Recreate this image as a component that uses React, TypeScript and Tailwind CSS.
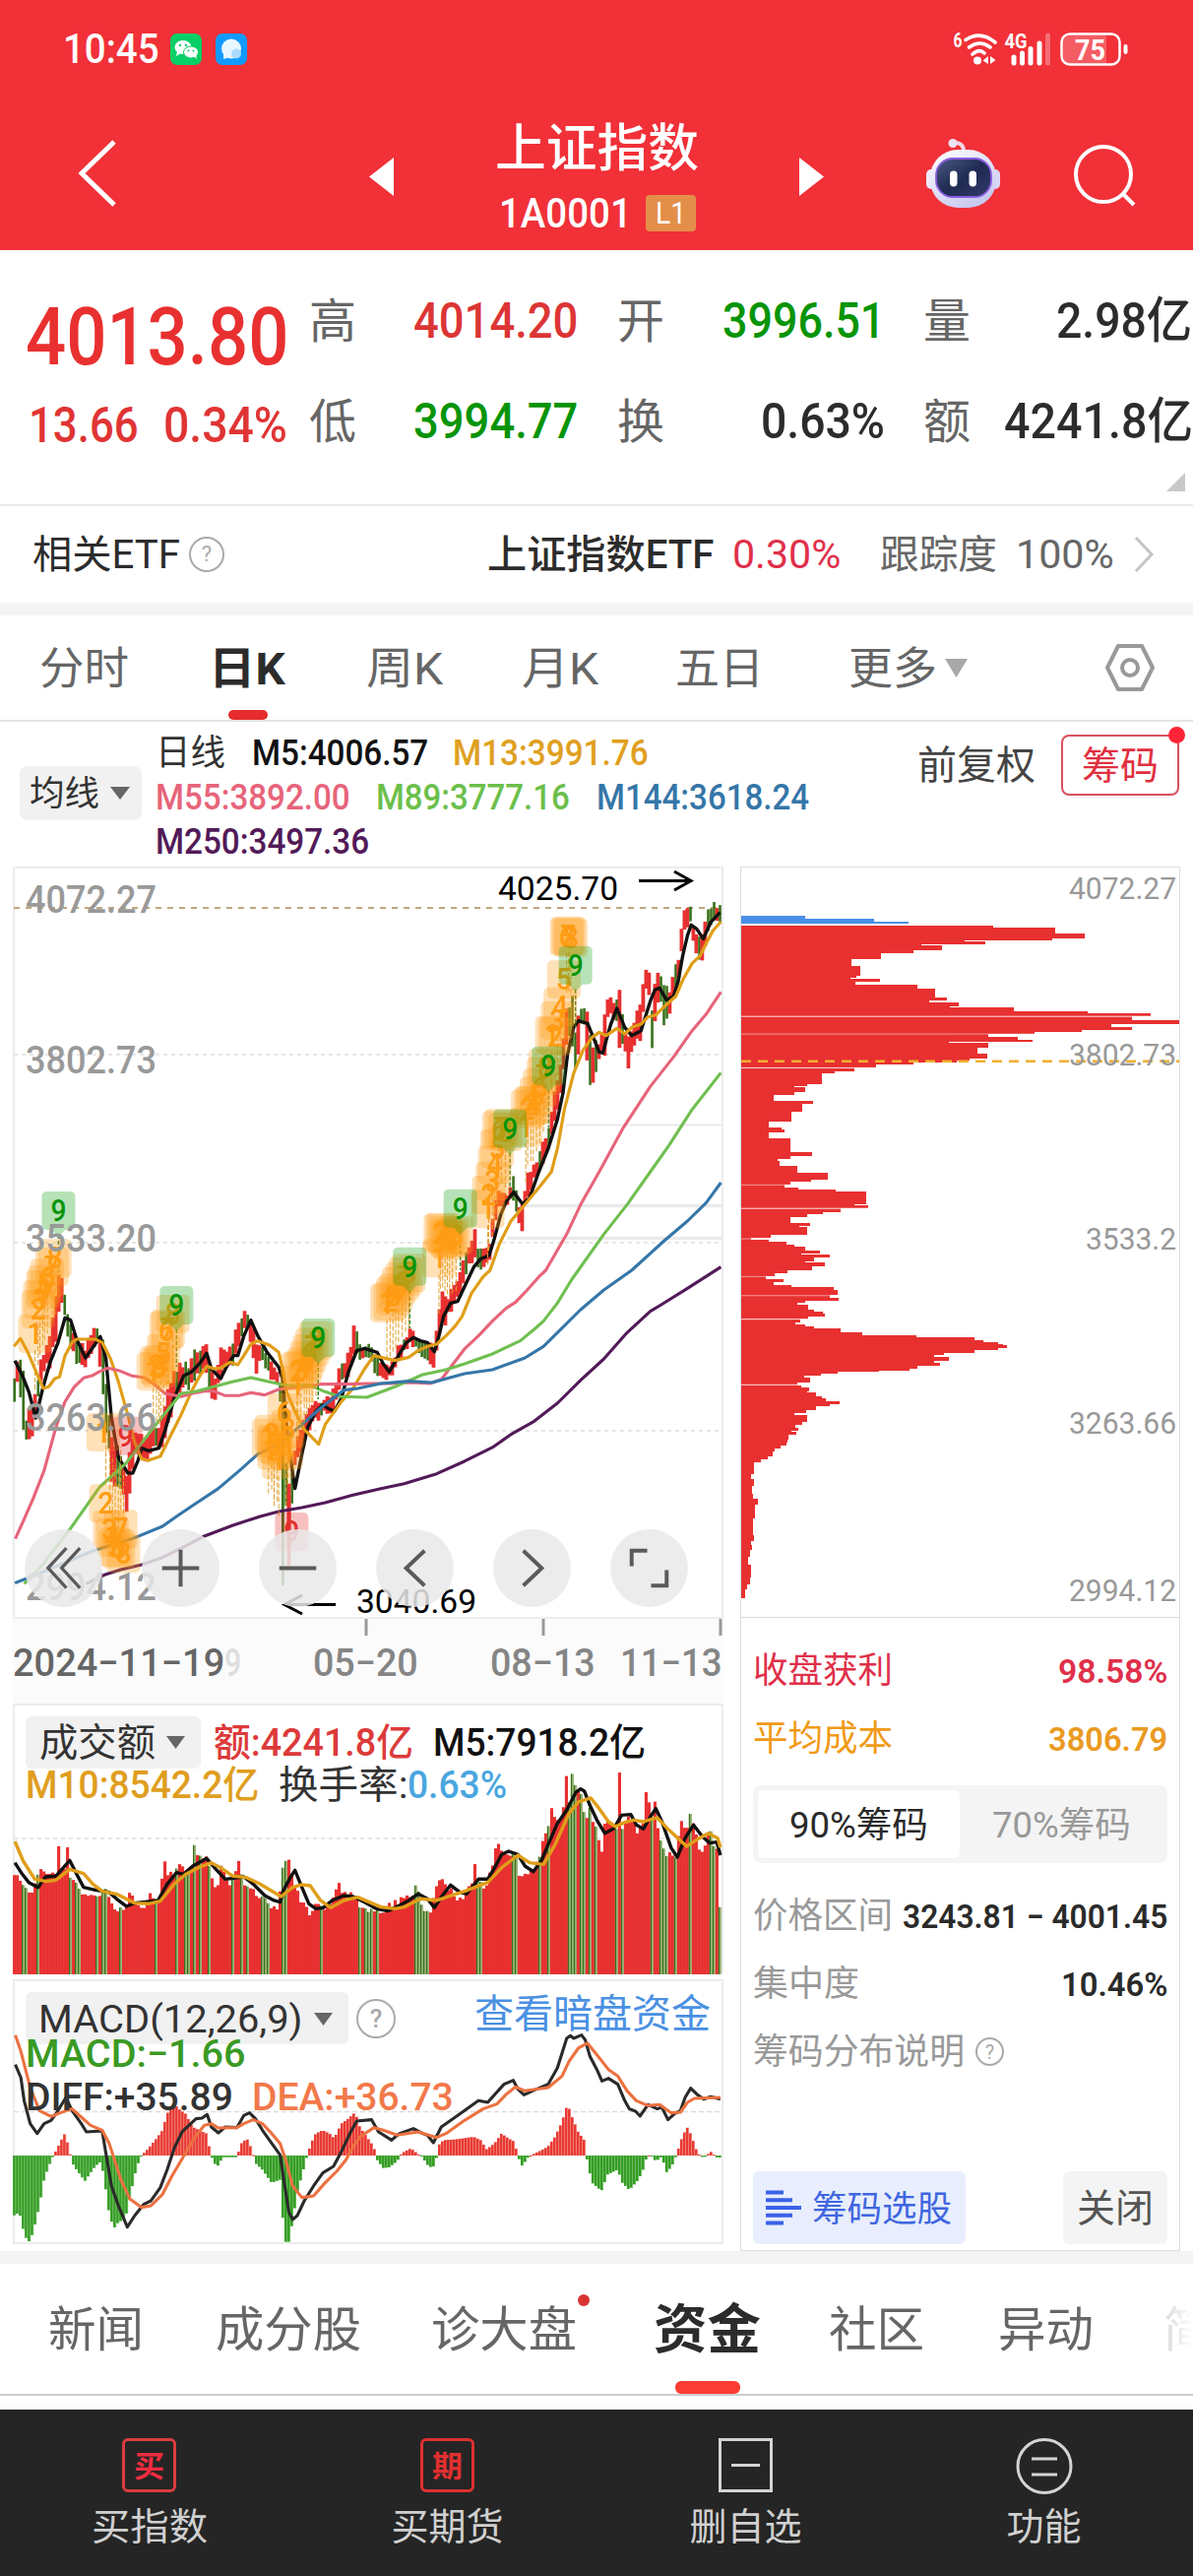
import React, { useLayoutEffect, useRef } from "react";

/* ---------- text that is condensed to a given width ---------- */
function T({ w, c = "", children }: { w: number; c?: string; children: React.ReactNode }) {
  const ref = useRef<HTMLSpanElement>(null);
  useLayoutEffect(() => {
    const el = ref.current;
    if (el) el.style.transform = `scaleX(${w / el.offsetWidth})`;
  }, [w, children]);
  return (
    <span className={"block shrink-0 leading-none whitespace-nowrap " + c} style={{ width: w }}>
      <span ref={ref} className="inline-block origin-left">{children}</span>
    </span>
  );
}

const Caret = ({ c = "" }: { c?: string }) => (
  <svg className={c} viewBox="0 0 20 14" preserveAspectRatio="none"><path d="M0 0H20L10 14Z" fill="currentColor" /></svg>
);

const Help = ({ c = "" }: { c?: string }) => (
  <span className={"flex shrink-0 items-center justify-center rounded-full border-2 border-[#aaa] leading-none text-[#aaa] " + c}>?</span>
);

/* ---------- data ---------- */
type P = [number, number];
function parse(s: string, dy = 0): P[] {
  return s.trim().split(/\s+/).map((q) => {
    const [x, y] = q.split(",").map(Number);
    return [x, y + dy] as P;
  });
}
const line = (low: string, high = "") =>
  [...parse(low), ...(high ? parse(high, -1230) : [])].map((p) => p.join(",")).join(" ");
function at(pts: number[][], x: number, k = 1) {
  let i = 1;
  while (i < pts.length - 1 && pts[i][0] < x) i++;
  const a = pts[i - 1], b = pts[i];
  const t = Math.max(0, Math.min(1, (x - a[0]) / (b[0] - a[0])));
  return a[k] + (b[k] - a[k]) * t;
}
const rnd = (i: number) => {
  const v = Math.sin(i * 127.1 + 11.7) * 43758.5453;
  return v - Math.floor(v);
};

const ranges = (s: string, dy: number) =>
  s.trim().split(/\s+/).map((q) => {
    const [x, a, b] = q.split(",").map(Number);
    return [x, a + dy, b + dy];
  });
const price = [
  ...ranges(`30,340,470 40,270,350 48,290,500 56,450,580 68,430,590 78,360,460 90,280,380 98,250,340 110,190,330 118,60,280 128,0,140
  138,90,180 146,150,250 160,230,300 170,240,340 185,250,340 196,210,290 208,190,250 220,200,420 230,400,560 240,500,680 252,550,700
  264,600,720 272,640,775 280,560,700 290,510,600 300,520,590 316,540,640 330,490,590 345,470,600 358,390,540 370,340,470 380,320,440
  395,290,400 405,310,400 420,265,370 435,260,350 445,250,360 455,330,430 463,360,440 476,250,360 490,270,340 500,240,350 512,180,290
  522,150,230 533,145,220 545,200,320 552,250,350 560,240,300 575,280,340 590,310,380 600,330,400 606,380,500 621,680,900 635,550,640
  650,490,580 665,450,530 680,410,500 695,420,470 710,410,480 720,370,480 733,310,380 750,270,370 763,190,290 780,260,310 793,240,300
  810,290,360 825,310,370 840,320,360 855,260,330 868,240,290 884,200,260 900,240,280 915,250,320 933,250,335 942,180,260 952,90,220
  965,95,180 980,60,140 993,10,100 1005,-40,50`, 0),
  ...ranges(`1022,1128,1220 1028,1175,1250 1040,1190,1270 1055,1170,1230 1063,1060,1150 1072,1010,1080 1085,1010,1075 1095,1020,1070
  1104,960,1040 1115,1040,1130 1124,1060,1150 1133,970,1050 1145,940,1010 1160,900,970 1170,850,930 1182,810,900 1192,720,810
  1200,670,800 1212,550,700 1222,420,560 1232,420,600 1240,510,690 1250,440,520 1258,430,540 1268,500,740 1277,550,720 1290,560,620
  1302,440,610 1310,410,460 1320,440,520 1328,430,500 1334,400,600 1345,510,590 1354,550,658 1362,480,590 1378,440,580 1390,320,430
  1397,325,420 1404,450,608 1412,360,490 1423,330,470 1430,350,530 1440,400,490 1452,340,440 1462,285,370 1470,170,250 1480,140,230
  1486,130,210 1494,210,280 1504,230,320 1512,230,350 1520,160,250 1530,140,210 1538,130,200 1548,145,200`, -1230),
];
const N = 240;
const xs = Array.from({ length: N }, (_, i) => 31 + i * 6.355);
const candles = xs.map((x, i) => {
  const a = at(price, x, 1), b = at(price, x, 2);
  const d = at(price, x + 4, 1) + at(price, x + 4, 2) - at(price, x - 4, 1) - at(price, x - 4, 2);
  const h = b - a;
  return { x, a: a + h * rnd(i) * 0.3, b: b - h * rnd(i + 500) * 0.3, up: d < 0 ? rnd(i + 900) > 0.2 : rnd(i + 900) > 0.65 };
});

const volTop = parse(`30,555 45,570 62,615 75,590 88,535 100,550 115,550 124,545 126,465 131,540 143,520 145,468 151,550 155,560 170,600 185,610 200,615 215,610
228,590 245,650 262,655 272,660 280,605 290,640 310,645 325,615 340,640 350,560 355,510 362,545 378,550 392,512 400,545 412,530 418,465 430,505
445,500 455,560 465,600 478,520 490,580 505,565 514,510 525,590 540,600 560,620 580,640 597,660 610,520 622,510 632,570 645,625
655,640 668,678 680,640 700,655 715,625 730,585 745,620 762,610 780,655 800,655 820,672 835,645 860,635 875,600 885,640 895,580
910,650 928,660 940,590 948,570 958,580 970,600 985,620 997,630 1010,580 1018,570 1022,515 1028,575 1045,590 1060,520 1068,470 1078,465
1090,500 1100,490 1110,470 1117,550 1128,560 1140,540 1155,520 1170,450 1180,420 1187,340 1195,375 1205,400 1212,360 1219,240
1226,330 1232,255 1240,285 1250,300 1262,380 1270,355 1280,400 1288,440 1296,480 1305,370 1315,400 1328,410 1334,243 1340,410
1355,380 1365,390 1375,430 1385,390 1390,305 1398,345 1405,390 1411,310 1418,430 1428,460 1436,500 1445,480 1453,520 1462,430
1468,382 1476,420 1486,375 1495,400 1503,460 1512,480 1522,440 1530,420 1538,470 1545,480 1550,657`);
const volumes = xs.map((x, i) => ({ x, y: at(volTop, x) + (rnd(i + 60) - 0.5) * 22, up: candles[i].up || rnd(i + 77) > 0.8 }));

const hist = parse(`30,750 42,740 50,790 58,825 65,830 75,780 85,720 95,640 105,600 115,567 122,550 132,520 140,500 148,540 156,590 165,610 183,645
195,620 205,600 218,585 225,640 235,740 245,790 255,770 270,760 282,680 295,600 305,567 320,545 340,510 350,490 360,440 375,408
385,425 400,440 415,480 430,490 445,500 452,550 460,590 470,598 480,572 510,572 520,530 532,515 543,550 550,590 565,610 585,650
605,640 612,830 622,830 630,770 640,680 650,630 660,575 670,530 680,500 695,490 710,500 720,515 735,470 750,455 765,435 775,480
790,510 805,540 812,580 825,605 838,603 855,585 865,560 885,545 900,562 910,572 920,595 930,605 937,595 945,535 955,520 980,518
1020,510 1035,520 1048,548 1065,530 1080,500 1095,515 1108,525 1115,570 1125,600 1135,575 1145,565 1160,555 1180,540 1195,510
1210,465 1222,410 1232,450 1245,495 1258,520 1265,590 1275,650 1295,675 1308,625 1330,610 1340,650 1355,672 1375,640 1388,600
1393,565 1405,570 1412,585 1425,570 1436,620 1450,590 1460,550 1470,505 1481,480 1492,520 1502,560 1515,575 1530,555 1545,575 1550,573`);

const chipRows = parse(`140,807 144,995 157,1084 167,985 170,720 172,783 178,588 181,650 191,562 196,464 210,374 223,400 243,390 247,372 250,462 256,386
262,575 270,629 288,665 294,610 298,702 305,675 308,868 315,1093 320,1287 326,1229 333,1374 341,1166 348,1229 354,1077 358,932
362,792 368,880 373,926 378,672 380,792 390,757 402,789 412,735 417,695 421,562 425,450 431,384 438,324 443,284 464,238 468,200
471,232 481,200 486,137 498,256 504,225 521,191 541,121 553,162 556,171 562,121 575,188 602,254 612,188 617,150 621,156 631,208
645,302 659,250 664,188 669,171 675,212 680,326 684,418 709,383 711,425 718,342 726,288 730,238 736,187 747,249 753,214 756,240
771,129 778,67 781,122 786,175 791,201 796,233 804,279 810,222 812,309 818,261 826,233 829,294 836,254 845,178 850,139 857,114
862,168 868,138 875,190 879,320 885,332 895,309 901,336 907,233 911,210 914,242 924,260 929,288 933,293 938,242 944,219 950,203
955,233 959,261 963,340 971,408 977,573 981,748 987,777 990,822 994,836 997,848 1003,820 1008,750 1013,657 1018,627 1021,672
1030,627 1034,645 1040,575 1045,552 1049,459 1052,333 1055,282 1060,230 1064,249 1073,210 1079,220 1084,245 1091,240 1094,266
1101,285 1106,296 1111,339 1117,308 1121,265 1130,235 1136,200 1140,238 1153,225 1160,203 1165,212 1171,190 1174,207 1180,183
1190,180 1195,177 1202,158 1209,139 1214,133 1225,119 1231,97 1236,78 1260,69 1270,77 1285,72 1300,75 1310,88 1322,80 1350,73
1385,77 1396,67 1405,72 1415,65 1430,59 1445,68 1472,65 1485,57 1495,50 1514,38`);

/* ---------- overlay signals ---------- */
type Badge = { x: number; y: number; n: string; k: "o" | "g" | "r" };
const list = (s: string): Badge[] =>
  s.trim().split(/\s+/).map((q) => {
    const [x, y, n] = q.split(",");
    return { x: +x, y: +y, n, k: "o" as const };
  });
const badges: Badge[] = [
  ...list("75,165,1 82,90,2 86,60,3 92,30,4 96,15,5 102,-5,6 112,-40,7 118,-65,8"),
  ...list("330,280,1 337,262,2 342,270,3 346,258,4 352,225,5 358,155,6 362,150,7 372,105,8"),
  ...list("222,465,1 228,682,2 236,762,3 242,785,4 248,815,5 255,820,6 260,760,7 266,835,8"),
  ...list("578,482,1 585,470,2 590,500,3 590,520,2 597,505,7 612,405,6 620,455,8 600,550,1 616,520,4"),
  ...list("640,320,1 640,280,2 648,275,3 655,265,4 660,245,5 666,225,6 672,205,7 680,185,8"),
  ...list("833,72,1 840,65,2 846,50,3 852,40,4 858,20,5 866,5,6 873,-10,7 880,-20,8"),
  ...list("945,-65,1 948,-142,2 953,-145,3 958,-135,4 963,-125,5 968,-120,6 974,-128,7 982,-135,8"),
  ...list("1050,-215,1 1052,-258,2 1060,-300,3 1065,-350,4 1070,-400,5 1074,-455,6 1080,-462,7 1088,-450,8"),
  ...list("1132,-465,1 1136,-520,2 1143,-530,3 1148,-530,4 1155,-560,5 1162,-585,6 1170,-620,7 1174,-645,8"),
  ...list("1188,-745,1 1195,-742,2 1200,-790,3 1206,-832,4 1214,-914,5 1220,-1045,6 1224,-1048,7 1229,-1042,8"),
];
const nines: Badge[] = [
  { x: 126, y: -210, n: "9", k: "g" }, { x: 380, y: 78, n: "9", k: "g" }, { x: 685, y: 177, n: "9", k: "g" },
  { x: 882, y: -40, n: "9", k: "g" }, { x: 991, y: -217, n: "9", k: "g" }, { x: 1098, y: -460, n: "9", k: "g" },
  { x: 1181, y: -652, n: "9", k: "g" }, { x: 1239, y: -958, n: "9", k: "g" },
  { x: 270, y: 476, n: "9", k: "r" }, { x: 628, y: 768, n: "9", k: "r" },
];
const SX = 0.4719;
function BadgeMark({ b }: { b: Badge }) {
  const x = b.x * SX, y = 1280 + b.y / 3;
  const fill = b.k === "g" ? "#10a010" : b.k === "r" ? "#e33030" : "#ff9c14";
  return (
    <g>
      <rect x={x - 17} y={y} width="34" height="39" rx="5" fill={fill} opacity="0.3" />
      {b.k === "g" && <path d={`M${x - 7} ${y + 39}h14l-7 7z`} fill={fill} opacity="0.3" />}
      <text x={x} y={y + 30} textAnchor="middle" fontSize="31" fontWeight="500" textLength="16" lengthAdjust="spacingAndGlyphs"
        fill={b.k === "g" ? "#089408" : fill}>{b.n}</text>
    </g>
  );
}

const Ln = ({ p, c, w = 3.1 }: { p: string; c: string; w?: number }) => (
  <polyline points={p} fill="none" stroke={c} strokeWidth={w} strokeLinejoin="round" vectorEffect="non-scaling-stroke" />
);
const Lab = ({ x, y, w, s = 39, f = "#999", children, wt = 500 }: { x: number; y: number; w: number; s?: number; f?: string; wt?: number; children: string }) => (
  <text x={x} y={y} fontSize={s} fill={f} fontWeight={wt} textLength={w} lengthAdjust="spacingAndGlyphs">{children}</text>
);

function KChart() {
  return (
    <svg className="block h-[764px] w-[722px]" viewBox="13 880 722 764">
      <rect x="14" y="881" width="720" height="762" fill="#fff" stroke="#ececec" strokeWidth="2" />
      <g stroke="#e6e6e6" strokeWidth="2">
        <path d="M14 1071H733M14 1262H733M14 1453H733" strokeDasharray="4 4" />
        <path d="M575 1142.500H733" stroke="#eaeaea" />
        <path d="M532 1224.500H733M515 1257.500H733" stroke="#eaeaea" strokeWidth="3.500" />
      </g>
      <path d="M14 922H733" stroke="#bfa77c" strokeWidth="2" strokeDasharray="6 6" />
      <g transform="translate(0 1280) scale(.4719 .3333)">
        {candles.map((k, i) => (
          <rect key={i} x={k.x - (k.up ? 4 : 2.5)} y={k.a} width={k.up ? 8 : 5.5} height={Math.max(20, k.b - k.a)} fill={k.up ? "#e83030" : "#38701b"} />
        ))}
        <rect x="606" y="400" width="6" height="590" fill="#38701b" />
        <rect x="618" y="680" width="8" height="250" fill="#e83030" />
        <Ln c="#111" w={3.4} p={line(`32,305 48,350 62,400 77,480 92,390 108,310 125,250 140,175 152,182 165,240 184,297 200,265 216,232 228,300 240,480 255,600
          275,648 286,648 297,610 305,572 320,580 342,572 355,520 375,420 395,352 412,340 432,310 445,283 455,330 475,360 490,318 503,290
          512,290 525,230 540,182 555,230 575,280 600,325 608,360 620,550 635,695 650,590 662,510 680,460 695,440 705,450 720,460 735,420
          750,340 768,275 785,268 800,275 812,280 825,315 838,340 850,310 862,280 875,250 890,235 905,245 920,250 935,278 945,230 955,170
          970,130 985,125 1000,80 1020,20`, `1035,1225 1053,1215 1065,1160 1078,1090 1090,1050 1106,1022 1125,1058 1140,1040 1160,960
          1180,890 1200,800 1212,720 1222,600 1235,520 1245,500 1265,508 1280,560 1290,595 1298,598 1305,560 1315,510 1328,462 1345,520
          1360,545 1380,530 1400,440 1410,405 1420,400 1435,437 1450,425 1460,380 1470,300 1480,240 1488,208 1500,220 1514,250 1530,200 1550,170`)} />
        <Ln c="#e09e18" w={3.2} p={line(`30,262 44,238 60,280 78,340 93,390 105,385 118,360 128,355 140,290 155,250 165,240 205,240 220,250 238,300 255,370 275,470
          290,555 305,605 318,610 345,597 365,540 390,470 412,400 430,352 445,322 460,330 475,328 495,310 512,318 525,290 540,255 555,245
          580,258 600,280 610,340 617,400 635,460 655,515 686,560 700,500 720,460 735,430 760,390 785,330 805,290 820,295 850,305 880,295
          900,275 920,262 940,255 960,230 980,200 995,170 1015,100 1040,50`, `1055,1260 1075,1180 1100,1110 1130,1060 1165,1000 1187,960
          1200,890 1215,770 1235,660 1255,590 1275,550 1290,535 1305,545 1328,523 1345,540 1360,520 1380,510 1395,488 1412,482 1435,450
          1455,425 1470,375 1490,325 1508,300 1520,265 1535,225 1552,198`)} />
        <Ln c="#e7647a" p={line(`33,848 50,795 70,730 95,640 120,510 140,430 160,385 180,358 200,350 212,340 232,328 255,335 285,352 310,357 330,375 355,405
          390,415 415,405 440,398 460,398 485,412 515,412 540,403 570,410 600,393 630,388 660,385 690,377 740,377 800,375 840,375 890,372
          925,375 950,363 970,325 1000,270 1030,230 1060,185 1090,145 1110,127 1135,90 1160,50`, `1175,1260 1220,1150 1250,1060 1290,960
          1340,830 1400,700 1450,610 1490,530 1520,480 1552,412`)} />
        <Ln c="#70bf50" p={line(`52,985 90,930 150,820 215,690 270,620 330,510 390,405 420,400 460,385 500,370 540,357 580,370 620,382 665,380 700,400 730,415
          790,417 850,385 910,348 960,333 1000,315 1060,285 1120,245 1150,210 1170,185 1200,130 1230,60`, `1245,1260 1300,1150 1350,1060
          1400,960 1440,880 1490,770 1552,658`)} />
        <Ln c="#3576a8" p={line(`32,983 100,945 200,885 290,845 350,810 380,780 420,742 470,695 520,635 555,590 600,560 650,500 690,450 740,395 770,390
          820,375 880,368 930,372 1000,345 1060,333 1130,297 1170,262 1200,220 1250,150 1300,90`, `1360,1260 1430,1170 1480,1110 1520,1055 1552,993`)} />
        <Ln c="#521a58" p={line(`185,985 225,958 260,942 305,927 350,905 400,870 440,840 500,808 560,780 600,765 650,753 700,738 760,715 820,695 870,680
          940,650 1000,612 1060,570 1100,530 1150,490 1200,435 1250,365 1300,300 1350,220 1400,155 1420,138 1480,85 1552,20`)} />
      </g>
      {badges.map((b, i) => {
        const x = b.x * SX, y = 1280 + b.y / 3 + 36;
        const down = b.x > 215 && b.x < 270;
        return <path key={i} d={down ? `M${x} ${y - 36}V${Math.max(1445, y - 100)}` : `M${x} ${y}V${y + 42}`} stroke="#e0a030" strokeWidth="1" strokeDasharray="5 2" />;
      })}
      {nines.filter((b) => b.k === "g").map((b, i) => (
        <path key={i} d={`M${b.x * SX} ${1280 + b.y / 3 + 44}v38`} stroke="#2b8020" strokeWidth="1.500" strokeDasharray="4 2" />
      ))}
      {badges.map((b, i) => <BadgeMark key={i} b={b} />)}
      {nines.map((b, i) => <BadgeMark key={i} b={b} />)}
      <Lab x={26} y={927} w={133}>4072.27</Lab>
      <Lab x={26} y={1090} w={133}>3802.73</Lab>
      <Lab x={26} y={1271} w={133}>3533.20</Lab>
      <Lab x={26} y={1453} w={133}>3263.66</Lab>
      <Lab x={26} y={1625} w={133}>2994.12</Lab>
      <Lab x={506} y={914} w={122} s={34} f="#000" wt={400}>4025.70</Lab>
      <Lab x={362} y={1638} w={122} s={34} f="#000" wt={400}>3040.69</Lab>
      <path d="M649 894.500H700M685 885L702 894.500L685 904" fill="none" stroke="#000" strokeWidth="3" />
      <path d="M341 1629.500H290M307 1620L289 1629.500L307 1639" fill="none" stroke="#000" strokeWidth="3" />
    </svg>
  );
}

function ChipChart() {
  const blue: P[] = [[121, 232], [127, 442], [132, 548]];
  const Y = (v: number) => 870 + v / 2.01;
  return (
    <svg className="block h-[763px] w-[446px]" viewBox="753 880 446 763">
      <g shapeRendering="crispEdges">
        {blue.map(([y, x], i) => (
          <rect key={i} x="753" y={Y(y)} width={x / 3 - 12.6} height={Y(137) - Y(y)} fill="#4a90e6" />
        ))}
        {chipRows.slice(0, -1).map(([y, x], i) => (
          <rect key={i} x="753" y={Y(y)} width={x / 3 - 12.6} height={Y(chipRows[i + 1][0]) - Y(y)} fill="#e83030" />
        ))}
      </g>
      <path d={[326, 431, 718, 944, 1078].map((v) => `M753 ${Y(v)}H1198`).join("")} stroke="#fff" strokeWidth="1" opacity=".85" />
      <path d={[362, 670, 780, 857, 896].map((v) => `M753 ${Y(v)}H1198`).join("")} stroke="#fff" strokeWidth="1" opacity=".5" />
      <path d={`M753 ${Y(417.5)}H1198`} stroke="#f0b030" strokeWidth="2.500" strokeDasharray="10 7" />
      <Lab x={1086} y={913} w={109} s={31} wt={400}>4072.27</Lab>
      <Lab x={1086} y={1082} w={109} s={31} wt={400}>3802.73</Lab>
      <Lab x={1103} y={1269} w={92} s={31} wt={400}>3533.2</Lab>
      <Lab x={1086} y={1456} w={109} s={31} wt={400}>3263.66</Lab>
      <Lab x={1086} y={1626} w={109} s={31} wt={400}>2994.12</Lab>
    </svg>
  );
}

function VolumeChart() {
  return (
    <svg className="block h-[276px] w-[722px]" viewBox="13 1730 722 276">
      <path d="M14 2004V1731H734V2004" fill="none" stroke="#ececec" strokeWidth="2" />
      <path d="M14 1867H733" stroke="#e6e6e6" strokeWidth="2" strokeDasharray="4 4" />
      <g transform="translate(0 1720) scale(.4719 .3333)">
        {volumes.map((v, i) => (
          <g key={i}>
            <rect x={v.x - 3.3} y={v.y} width="6.600" height={855 - v.y} fill={v.up ? "#e83030" : "#9bb57a"} />
            {!v.up && <rect x={v.x - 3.3} y={v.y} width="2.600" height={855 - v.y} fill="#38701b" />}
          </g>
        ))}
        <Ln c="#111" w={3.4} p={line(`32,515 48,550 62,575 82,590 98,558 120,556 150,508 165,550 180,590 205,598 235,605 255,630 272,648 290,638 340,630
          360,580 380,545 395,550 415,525 445,502 465,535 485,565 525,558 545,580 570,615 590,630 603,635 610,600 625,560 635,538 650,590
          665,640 680,655 695,653 715,630 740,615 760,618 785,635 810,655 835,662 860,645 880,630 900,610 920,625 935,652 950,620 970,583
          990,605 1005,610 1030,565 1050,565 1065,530 1080,490 1095,480 1115,490 1130,525 1148,542 1165,510 1180,460 1200,395 1220,355
          1240,300 1250,290 1258,297 1270,340 1285,385 1302,425 1322,410 1338,370 1358,368 1370,400 1385,412 1400,375 1412,350 1425,390
          1445,470 1458,498 1475,440 1493,400 1512,435 1528,455 1543,452 1551,492`)} />
        <Ln c="#e09e18" w={3.4} p={line(`32,450 50,510 75,565 100,572 120,568 150,535 180,548 200,580 220,602 250,610 290,638 320,640 345,632 375,580 400,550
          430,528 455,515 475,530 500,555 530,560 560,580 605,618 630,590 650,582 668,585 690,630 712,652 740,630 770,620 820,650 850,655
          870,650 905,625 940,630 1000,602 1050,575 1080,530 1115,492 1140,515 1170,520 1195,460 1225,365 1245,330 1272,318 1290,350
          1310,390 1325,405 1345,392 1365,385 1385,390 1415,378 1440,415 1478,465 1500,445 1525,425 1545,440 1551,468`)} />
      </g>
    </svg>
  );
}

function MacdChart() {
  return (
    <svg className="block h-[269px] w-[722px]" viewBox="13 2010 722 269">
      <rect x="14" y="2011" width="720" height="267" fill="#fff" stroke="#ececec" strokeWidth="2" />
      <rect x="26" y="2023" width="328" height="53" rx="6" fill="#f1f1f1" />
      <path d="M14 2144.500H733" stroke="#ddd" strokeWidth="1.500" strokeDasharray="5 3" />
      <g transform="translate(0 2000) scale(.4719 .3333)">
        {xs.map((x, i) => {
          const y = at(hist, x), up = y < 568;
          return <rect key={i} x={x - 3.2} y={up ? y : 567} width="6.400" height={Math.max(3, up ? 567 - y : y - 567)} fill={up ? "#e83a32" : "#339d22"} />;
        })}
        {xs.map((x, i) => {
          const y = at(hist, x), up = y < 568;
          return <rect key={i} x={x + 2} y={up ? y : 567} width="1.100" height={Math.max(3, up ? 567 - y : y - 567)} fill={up ? "#f7b0ac" : "#9cd094"} />;
        })}
        <Ln c="#2a2a2a" p={line(`33,290 45,330 52,400 65,470 80,500 95,470 110,460 125,430 142,390 155,430 175,470 186,495 220,492 228,560 240,660
          255,720 274,785 290,750 310,715 325,705 345,665 360,610 375,545 392,495 422,455 435,453 446,442 455,480 470,498 485,480 510,482
          525,445 537,437 550,455 565,490 585,530 603,565 612,650 622,740 630,762 640,750 655,705 675,660 695,620 718,600 735,555 755,495
          768,462 800,458 815,495 843,520 860,500 890,485 910,500 920,505 933,528 950,480 990,440 1030,400 1050,405 1085,350 1105,338
          1115,365 1128,382 1150,368 1180,350 1200,300 1210,255 1220,210 1228,202 1235,210 1252,200 1260,215 1270,265 1285,305 1296,340
          1310,332 1330,350 1345,400 1355,425 1368,432 1378,447 1395,412 1415,425 1425,420 1438,458 1452,440 1465,430 1475,390 1487,362
          1500,380 1515,395 1530,388 1551,395`)} />
        <Ln c="#ec7140" p={line(`33,200 45,250 65,360 85,430 110,448 130,437 155,425 175,450 195,475 220,490 235,530 260,640 280,700 305,725 325,720
          350,685 370,630 395,570 420,510 440,475 455,470 470,483 510,482 525,470 545,458 565,470 585,500 603,530 615,580 630,660 650,695
          675,690 700,650 725,615 745,580 760,540 775,510 805,482 825,490 855,505 900,495 940,512 960,500 1000,460 1040,425 1070,410
          1090,380 1110,358 1130,370 1180,360 1210,325 1225,280 1245,240 1265,225 1285,260 1310,305 1330,325 1350,370 1370,400 1395,415
          1420,412 1445,437 1465,435 1480,405 1495,393 1551,390`)} />
      </g>
    </svg>
  );
}

/* ---------- page sections ---------- */
function StatusBar() {
  return (
    <div className="flex h-[100px] items-center pl-[64px] text-white">
      <T w={98} c="text-[42px] font-medium">10:45</T>
      <svg className="ml-[11px] size-8" viewBox="0 0 32 32">
        <rect width="32" height="32" rx="7" fill="#08cf66" />
        <ellipse cx="13" cy="14" rx="8.500" ry="7" fill="#fff" /><path d="M7 18l-1 5 5-3z" fill="#fff" />
        <ellipse cx="21" cy="19" rx="7.500" ry="6" fill="#fff" stroke="#08cf66" /><path d="M24 23l3 3-1-5z" fill="#fff" />
        <g fill="#08cf66"><circle cx="10" cy="12" r="1.200" /><circle cx="16" cy="12" r="1.200" /><circle cx="18.500" cy="17.500" r="1" /><circle cx="23.500" cy="17.500" r="1" /></g>
      </svg>
      <svg className="ml-[14px] size-8" viewBox="0 0 32 32">
        <rect width="32" height="32" rx="7" fill="#119bff" />
        <circle cx="16" cy="15.500" r="10" fill="#e8f7ff" /><path d="M8 20v6l7-2z" fill="#e8f7ff" />
        <circle cx="21" cy="20.500" r="5" fill="#a9dcff" />
      </svg>
      <svg className="ml-[717px] h-[36px] w-[180px]" viewBox="968 31 180 36" fill="none" stroke="#fff">
        <g strokeWidth="3.600" strokeLinecap="round">
          <path d="M981 39.500Q996 29.500 1011 42M984.500 47Q995.500 39 1006 47M988 54Q995 48 1000 53" />
          <path d="M1030 57V63M1038.500 53V63M1047 48.500V63M1056 43V63" strokeWidth="5" />
          <path d="M1064.500 35V63" strokeWidth="5" opacity=".3" />
        </g>
        <circle cx="993" cy="60.500" r="4" fill="#fff" stroke="none" />
        <path d="M1004 56V64L998.500 60.500ZM1006 56V64L1011.500 60Z" fill="#fff" stroke="none" />
        <rect x="1078.500" y="33.500" width="59" height="31" rx="8.500" strokeWidth="2.500" />
        <path d="M1124 35V63.500H1087Q1080 63.500 1080 56V42Q1080 35 1087 35Z" fill="#fff" opacity=".22" stroke="none" />
        <path d="M1143.500 46V52" strokeWidth="4" strokeLinecap="round" />
        <g fill="#fff" stroke="none" fontWeight="700">
          <text x="968.500" y="47" fontSize="20" textLength="9" lengthAdjust="spacingAndGlyphs">6</text>
          <text x="1020.500" y="48" fontSize="20" textLength="23" lengthAdjust="spacingAndGlyphs">4G</text>
          <text x="1092" y="60" fontSize="30" textLength="31" lengthAdjust="spacingAndGlyphs">75</text>
        </g>
      </svg>
    </div>
  );
}

function TitleBar() {
  return (
    <div className="flex h-[154px] items-start text-white">
      <svg className="mt-[41px] ml-[76px] h-[70px] w-[44px]" viewBox="0 0 44 70"><path d="M40 3L7 35L40 67" fill="none" stroke="#fff" strokeWidth="5" /></svg>
      <svg className="mt-[60px] ml-[255px] h-[39px] w-[25px]" viewBox="0 0 25 39"><path d="M25 0V39L0 19.500Z" fill="#fff" /></svg>
      <div className="ml-[103px] flex w-[209px] flex-col pt-[26px]">
        <T w={207} c="text-[52px] font-medium">上证指数</T>
        <div className="mt-[20px] flex h-[37px] items-center pl-[4px]">
          <T w={135} c="text-[43px] font-medium">1A0001</T>
          <span className="ml-[14px] flex h-[37px] w-[51px] items-center justify-center rounded-[4px] bg-[#e38f4a]">
            <T w={31} c="text-[31px]">L1</T>
          </span>
        </div>
      </div>
      <svg className="mt-[60px] ml-[100px] h-[39px] w-[25px]" viewBox="0 0 25 39"><path d="M0 0V39L25 19.500Z" fill="#fff" /></svg>
      <svg className="mt-[40px] ml-[103px] h-[72px] w-[78px]" viewBox="940 140 78 72">
        <defs>
          <linearGradient id="shell" x1="0" y1="0" x2="0.600" y2="1"><stop offset="0" stopColor="#fff" /><stop offset="1" stopColor="#c9c8ef" /></linearGradient>
          <linearGradient id="face" x1="0" y1="0" x2="1" y2="1"><stop offset="0" stopColor="#4c5a85" /><stop offset=".5" stopColor="#1f2b52" /><stop offset="1" stopColor="#323a6b" /></linearGradient>
        </defs>
        <path d="M968 145Q979 144 979 154" fill="none" stroke="#f4d5e4" strokeWidth="4" /><circle cx="968" cy="145.500" r="4.500" fill="#ece3f4" />
        <rect x="941" y="172" width="12" height="20" rx="5" fill="#eeeafb" /><rect x="1004" y="172" width="12" height="20" rx="5" fill="#d9d6f5" />
        <rect x="945" y="152" width="67" height="59" rx="28" fill="url(#shell)" />
        <rect x="951" y="161" width="56" height="39" rx="17" fill="url(#face)" stroke="#8a5ce0" strokeWidth="1.800" />
        <rect x="965" y="173.500" width="7.500" height="16" rx="3.700" fill="#fff" /><rect x="984.500" y="173.500" width="7.500" height="16" rx="3.700" fill="#fff" />
      </svg>
      <svg className="mt-[46px] ml-[71px] h-[66px] w-[66px]" viewBox="1089 146 66 66" fill="none" stroke="#fff" strokeWidth="4">
        <circle cx="1121" cy="177" r="28" /><path d="M1141 197L1152 208" />
      </svg>
    </div>
  );
}

function Quote() {
  const g = "text-[48px] text-[#666] pt-[2px]";
  return (
    <div className="relative h-[260px] border-b-2 border-[#ebebeb] text-[50px] font-medium text-[#2c2c2c]">
      <div className="flex h-full">
        <div className="w-[314px] pl-[26px] text-[#e03434]">
          <T w={267} c="mt-[47px] text-[82px] text-[#e93030]">4013.80</T>
          <div className="mt-[24px] flex pl-[3px]">
            <T w={112}>13.66</T><span className="w-[25px]" /><T w={126}>0.34%</T>
          </div>
        </div>
        <div className="flex-1 pt-[47px]">
          <div className="flex h-[50px] items-center">
            <T w={48} c={g + " font-normal"}>高</T><T w={167} c="ml-[58px] text-[#dc3535]">4014.20</T>
            <T w={48} c={g + " ml-[40px] font-normal"}>开</T><T w={165} c="ml-[59px] text-[#089408]">3996.51</T>
            <T w={48} c={g + " ml-[39px] font-normal"}>量</T><T w={138} c="ml-[87px]">2.98亿</T>
          </div>
          <div className="mt-[52px] flex h-[50px] items-center">
            <T w={48} c={g + " font-normal"}>低</T><T w={167} c="ml-[58px] text-[#089408]">3994.77</T>
            <T w={48} c={g + " ml-[40px] font-normal"}>换</T><T w={126} c="ml-[98px]">0.63%</T>
            <T w={48} c={g + " ml-[39px] font-normal"}>额</T><T w={192} c="ml-[34px]">4241.8亿</T>
          </div>
        </div>
      </div>
      <svg className="absolute right-[8px] bottom-[13px] size-[19px]" viewBox="0 0 19 19"><path d="M19 0V19H0Z" fill="#c8c8c8" /></svg>
    </div>
  );
}

function EtfRow() {
  return (
    <div className="flex h-[98px] items-center pl-[33px] text-[40px] text-[#2c2c2c]">
      <T w={150} c="pt-[2px]">相关ETF</T>
      <Help c="ml-[9px] size-[36px] text-[22px]" />
      <T w={230} c="ml-[267px] pt-[2px] font-medium">上证指数ETF</T>
      <T w={110} c="ml-[19px] pt-[2px] text-[#e0304a]">0.30%</T>
      <T w={119} c="ml-[40px] pt-[2px] text-[#666]">跟踪度</T>
      <T w={100} c="ml-[19px] pt-[2px] text-[#666]">100%</T>
      <svg className="ml-[19px] h-[38px] w-[23px]" viewBox="0 0 23 38"><path d="M3 2L19 19L3 36" fill="none" stroke="#c4c4c4" strokeWidth="3" /></svg>
    </div>
  );
}

function PeriodTabs() {
  return (
    <div className="relative flex h-[108px] items-center border-b-2 border-[#e5e5e5] pl-[40px] text-[45px] text-[#666]">
      <T w={91} c="pt-[2px]">分时</T>
      <T w={78} c="ml-[81px] pt-[2px] font-bold text-[#2c2c2c]">日K</T>
      <T w={78} c="ml-[82px] pt-[2px]">周K</T>
      <T w={78} c="ml-[80px] pt-[2px]">月K</T>
      <T w={90} c="ml-[78px] pt-[2px]">五日</T>
      <T w={90} c="ml-[86px] pt-[2px]">更多</T>
      <Caret c="ml-[8px] h-[19px] w-[23px] text-[#a8a8a8]" />
      <svg className="ml-[139px] h-[50px] w-[52px]" viewBox="0 0 52 50" fill="none" stroke="#999" strokeWidth="4">
        <path d="M14 3H38L49 25L38 47H14L3 25Z" strokeLinejoin="round" /><circle cx="26" cy="25" r="8" />
      </svg>
      <span className="absolute bottom-0 left-[232px] h-[10px] w-[40px] rounded-[5px] bg-[#e62c2c]" />
    </div>
  );
}

function MaHeader() {
  return (
    <div className="flex h-[147px] text-[36px] font-medium">
      <div className="mt-[45px] ml-[20px] flex h-[55px] w-[124px] items-center rounded-[8px] bg-[#f1f1f1] pl-[10px] text-[35px] font-normal text-[#333]">
        <T w={71} c="pt-[2px]">均线</T><Caret c="ml-[11px] h-[13px] w-[20px] text-[#666]" />
      </div>
      <div className="ml-[14px] flex w-[680px] flex-col gap-[9px] pt-[14px]">
        <div className="flex">
          <T w={71} c="font-normal text-[#333]">日线</T><T w={179} c="ml-[27px] text-[#111]">M5:4006.57</T><T w={199} c="ml-[25px] text-[#e0a020]">M13:3991.76</T>
        </div>
        <div className="flex">
          <T w={198} c="text-[#e7647a]">M55:3892.00</T><T w={197} c="ml-[26px] text-[#6cbf4b]">M89:3777.16</T><T w={216} c="ml-[27px] text-[#3576a8]">M144:3618.24</T>
        </div>
        <T w={217} c="text-[#521a58]">M250:3497.36</T>
      </div>
      <T w={120} c="mt-[25px] ml-[94px] text-[40px] font-normal text-[#444]">前复权</T>
      <div className="relative mt-[13px] ml-[26px] flex h-[62px] w-[120px] items-center justify-center rounded-[8px] border-2 border-[#d9505c] bg-white text-[39px] font-normal text-[#e03040]">
        <T w={78} c="pt-[2px]">筹码</T>
        <span className="absolute -top-[10px] -right-[8px] size-[17px] rounded-full bg-[#ff2438]" />
      </div>
    </div>
  );
}

const ctl = [
  "M50 15L27 40L50 65M67 15L44 40L67 65", "M21 40H59M40 21V59", "M21 40H59", "M50 22L31 40L50 58", "M31 22L50 40L31 58",
  "M22 38V22H38M58 42V58H42",
];

function Charts() {
  return (
    <div className="w-[752px] pl-[13px]">
      <div className="relative">
        <KChart />
        <div className="absolute bottom-[12px] left-[12px] flex gap-[40px]">
          {ctl.map((d, i) => (
            <button key={i} className="size-[79px] rounded-full bg-[#e9e9e9]/85">
              <svg viewBox="0 0 80 80" className="size-full"><path d={d} fill="none" stroke="#5a5a5a" strokeWidth="4" transform={i === 0 ? "translate(2 7) scale(.82)" : undefined} /></svg>
            </button>
          ))}
        </div>
      </div>
      <div className="flex h-[86px] w-[722px] flex-col bg-[#fbfbfb] text-[39px] font-medium text-[#858585]">
        <svg className="block h-[18px] w-[722px]" viewBox="13 1644 722 18"><path d="M372 1644V1661M552 1644V1661M732 1644V1661" stroke="#999" strokeWidth="3" /></svg>
        <div className="mt-[8px] flex">
          <T w={215} c="text-[#666]">2024−11−19</T><T w={17} c="text-[#ddd]">9</T>
          <T w={107} c="ml-[73px]">05−20</T><T w={107} c="ml-[73px]">08−13</T><T w={104} c="ml-[25px]">11−13</T>
        </div>
      </div>
      <div className="relative">
        <VolumeChart />
        <div className="absolute inset-x-0 top-0 text-[39px]">
          <div className="flex items-center pt-[13px] pl-[13px]">
            <div className="flex h-[53px] w-[178px] items-center rounded-[6px] bg-[#f1f1f1] pl-[14px] text-[#333]">
              <T w={118} c="pt-[2px]">成交额</T><Caret c="ml-[11px] h-[13px] w-[19px] text-[#666]" />
            </div>
            <T w={203} c="ml-[13px] pt-[2px] font-medium text-[#dc3a3a]">额:4241.8亿</T>
            <T w={216} c="ml-[20px] pt-[2px] font-medium text-[#111]">M5:7918.2亿</T>
          </div>
          <div className="-mt-[2px] flex pl-[13px]">
            <T w={237} c="font-medium text-[#e09e20]">M10:8542.2亿</T>
            <T w={131} c="ml-[20px] text-[#333]">换手率:</T>
            <T w={101} c="font-medium text-[#4aa6e0]">0.63%</T>
          </div>
        </div>
      </div>
      <div className="relative mt-[4px]">
        <MacdChart />
        <div className="absolute inset-x-0 top-0 text-[39px] font-medium text-[#333]">
          <div className="flex pl-[26px]">
            <T w={268} c="mt-[22px] font-normal">MACD(12,26,9)</T><Caret c="mt-[34px] ml-[12px] h-[13px] w-[19px] text-[#666]" />
            <Help c="mt-[20px] ml-[24px] size-[40px] text-[26px]" />
            <T w={240} c="mt-[16px] ml-[80px] text-[40px] font-normal text-[#4a90e2]">查看暗盘资金</T>
          </div>
          <div className="-mt-[4px] pl-[13px]">
            <T w={224} c="text-[#3a9a24]">MACD:−1.66</T>
            <div className="mt-[5px] flex"><T w={211}>DIFF:+35.89</T><T w={205} c="ml-[19px] text-[#f2794a]">DEA:+36.73</T></div>
          </div>
        </div>
      </div>
    </div>
  );
}

function ChipPanel() {
  const row = "flex h-[69px] items-center justify-between";
  return (
    <div className="h-[1406px] w-[447px] border border-[#dedede]">
      <div className="-my-px"><ChipChart /></div>
      <div className="flex h-[643px] flex-col border-t border-[#dedede] pr-[12px] pl-[12px] text-[36px] text-[#999]">
        <div className="pt-[19px]">
          <div className={row}><T w={142} c="text-[#e0304a]">收盘获利</T><T w={111} c="text-[34px] font-semibold text-[#e0304a]">98.58%</T></div>
          <div className={row}><T w={142} c="text-[#f09a18]">平均成本</T><T w={121} c="text-[34px] font-semibold text-[#ea9a22]">3806.79</T></div>
        </div>
        <div className="mt-[13px] flex h-[79px] w-[421px] rounded-[8px] bg-[#f4f4f4] p-[5px]">
          <div className="flex w-[205px] items-center justify-center rounded-[5px] bg-white"><T w={141} c="pt-[2px] text-[#2a2a2a]">90%筹码</T></div>
          <div className="flex flex-1 items-center justify-center"><T w={141} c="pt-[2px]">70%筹码</T></div>
        </div>
        <div className="pt-[19px]">
          <div className={row}><T w={142}>价格区间</T><T w={269} c="text-[34px] font-semibold text-[#2a2a2a]">3243.81 − 4001.45</T></div>
          <div className={row}><T w={108}>集中度</T><T w={108} c="text-[34px] font-semibold text-[#2a2a2a]">10.46%</T></div>
          <div className="flex h-[69px] items-center"><T w={215}>筹码分布说明</T><Help c="ml-[11px] size-[29px] text-[20px]" /></div>
        </div>
        <div className="mt-[87px] flex justify-between">
          <div className="flex h-[74px] w-[216px] items-center rounded-[6px] bg-[#e8eefd] pl-[13px] text-[#3f66e0]">
            <svg className="h-[36px] w-[36px]" viewBox="0 0 36 36"><path d="M0 2.500H18M0 10.200H27M0 18H36M0 25.800H27M0 33.500H18" stroke="#3a62e8" strokeWidth="4" /></svg>
            <T w={142} c="ml-[11px] pt-[3px]">筹码选股</T>
          </div>
          <div className="flex h-[74px] w-[106px] items-center justify-center rounded-[6px] bg-[#f4f4f4] text-[39px] text-[#555]"><T w={78} c="pt-[3px]">关闭</T></div>
        </div>
      </div>
    </div>
  );
}

function NewsTabs() {
  return (
    <div className="relative flex h-[134px] items-center overflow-hidden border-b-2 border-[#ccc] pt-[3px] pl-[49px] text-[49px] text-[#666]">
      <T w={97}>新闻</T>
      <T w={148} c="ml-[73px]">成分股</T>
      <T w={148} c="ml-[71px]">诊大盘</T>
      <T w={109} c="ml-[78px] text-[54px] font-bold text-[#2c2c2c]">资金</T>
      <T w={97} c="ml-[69px]">社区</T>
      <T w={97} c="ml-[75px]">异动</T>
      <T w={49} c="ml-[71px] text-[#a8a8a8]">简</T>
      <span className="absolute inset-y-0 right-0 w-[40px] bg-gradient-to-r from-white/40 to-white" />
      <span className="absolute top-[31px] left-[587px] size-[12px] rounded-full bg-[#d93434]" />
      <span className="absolute bottom-0 left-[686px] h-[13px] w-[66px] rounded-[6px] bg-[#fa3c33]" />
    </div>
  );
}

function BottomNav() {
  const col = "flex w-[303px] flex-col items-center pt-[29px]";
  const box = "flex size-[55px] items-center justify-center rounded-[6px] border-[3px]";
  return (
    <div className="flex h-[169px] bg-[#252525] text-[38px] text-[#d0d0d0]">
      <div className={col}>
        <span className={box + " border-[#dc3c40] text-[30px] font-bold text-[#f02c40]"}><T w={31} c="pt-[2px]">买</T></span>
        <T w={118} c="mt-[16px]">买指数</T>
      </div>
      <div className={col}>
        <span className={box + " border-[#e03030] text-[30px] font-bold text-[#e03030]"}><T w={31} c="pt-[2px]">期</T></span>
        <T w={114} c="mt-[16px]">买期货</T>
      </div>
      <div className={col}>
        <svg className="size-[55px]" viewBox="0 0 55 55"><path d="M1.500 1.500H53.500V53.500H1.500ZM13 27.500H42" fill="none" stroke="#d4d4d4" strokeWidth="3" /></svg>
        <T w={114} c="mt-[16px]">删自选</T>
      </div>
      <div className={col}>
        <svg className="size-[58px]" viewBox="0 0 58 58" fill="none" stroke="#d4d4d4" strokeWidth="3"><circle cx="29" cy="28.500" r="27" /><path d="M16 21H42M16 37H42" /></svg>
        <T w={76} c="mt-[13px]">功能</T>
      </div>
    </div>
  );
}

export default function App() {
  return (
    <div className="w-[1212px] overflow-hidden bg-white [font-family:Roboto,'Noto_Sans_CJK_SC',sans-serif]">
      <div className="bg-[#f13038]"><StatusBar /><TitleBar /></div>
      <Quote />
      <EtfRow />
      <div className="h-[13px] bg-[#f4f4f4]" />
      <PeriodTabs />
      <MaHeader />
      <div className="flex h-[1406px] items-start"><Charts /><ChipPanel /></div>
      <div className="h-[13px] bg-[#f4f4f4]" />
      <NewsTabs />
      <div className="h-[14px]" />
      <BottomNav />
    </div>
  );
}
